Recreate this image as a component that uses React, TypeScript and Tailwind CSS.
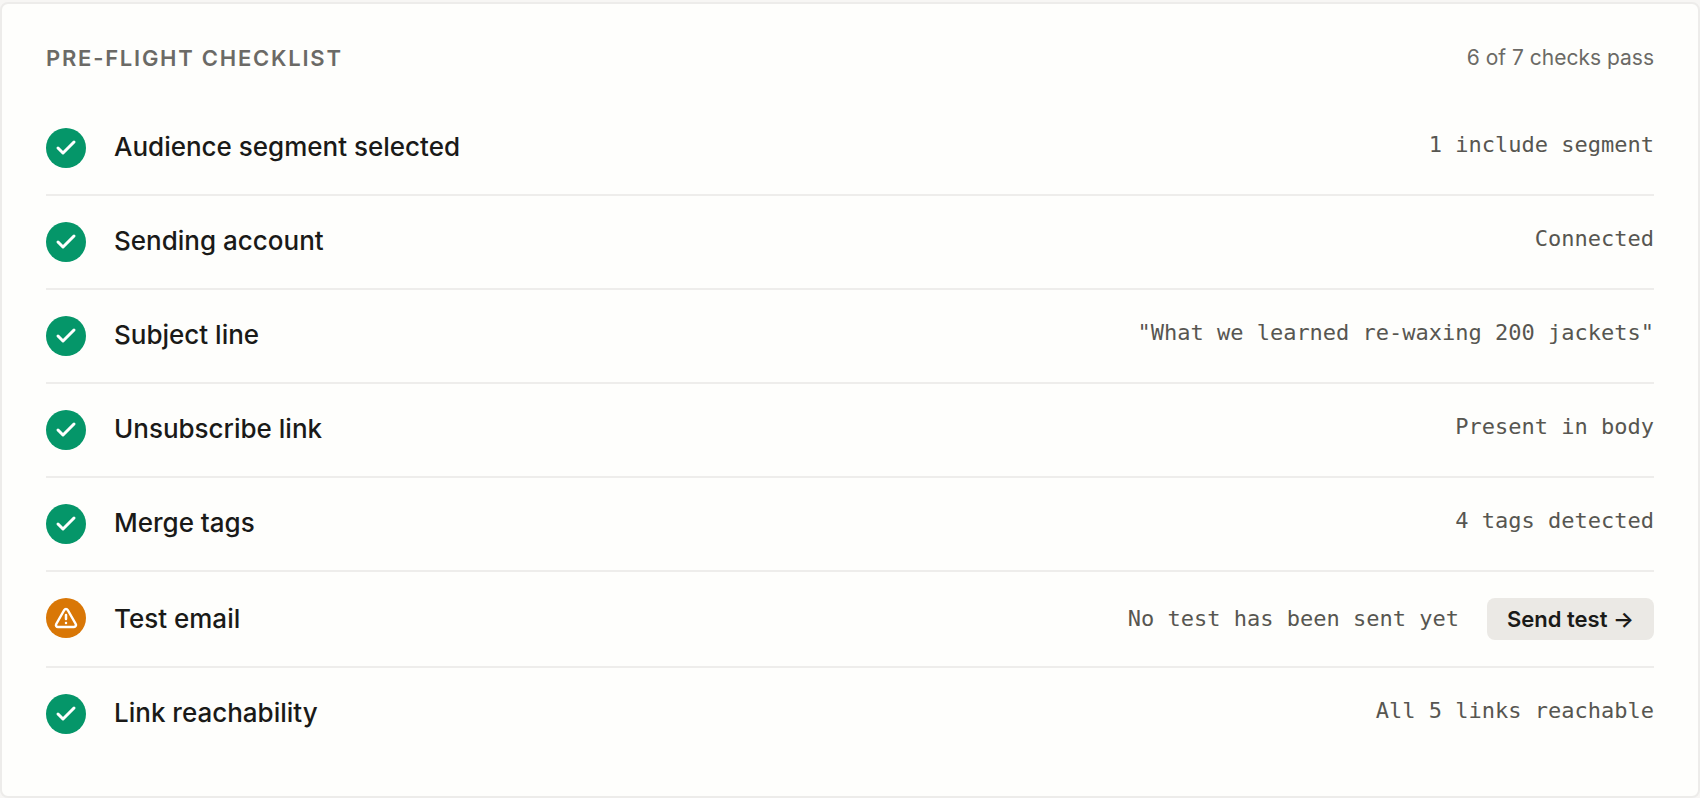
import { Check, TriangleAlert } from "lucide-react";

type CheckItem = {
  title: string;
  detail: string;
  action?: string;
};

const CHECKS: CheckItem[] = [
  { title: "Audience segment selected", detail: "1 include segment" },
  { title: "Sending account", detail: "Connected" },
  { title: "Subject line", detail: '"What we learned re-waxing 200 jackets"' },
  { title: "Unsubscribe link", detail: "Present in body" },
  { title: "Merge tags", detail: "4 tags detected" },
  {
    title: "Test email",
    detail: "No test has been sent yet",
    action: "Send test →",
  },
  { title: "Link reachability", detail: "All 5 links reachable" },
];

const StatusIcon = ({ passed }: { passed: boolean }) => {
  return (
    <span
      className={`flex size-10 shrink-0 items-center justify-center self-start rounded-full text-white ${
        passed ? "bg-[#059669]" : "bg-[#d97706]"
      }`}
    >
      {passed ? (
        <Check size={24} strokeWidth={3} />
      ) : (
        <TriangleAlert size={24} strokeWidth={2.5} />
      )}
    </span>
  );
};

const ChecklistRow = ({ title, detail, action }: CheckItem) => {
  return (
    <li
      className={`flex gap-7 border-b-2 border-[#eeedeb] py-[26px] last:border-b-0 ${
        action ? "items-center" : "items-start"
      }`}
    >
      <StatusIcon passed={!action} />

      <span className="flex-1 text-[26px] leading-[38px] font-medium text-[#1a1a18]">
        {title}
      </span>

      <span className="font-['DejaVu_Sans_Mono',monospace] text-[22px] leading-[34px] text-[#575651]">
        {detail}
      </span>

      {action && (
        <button
          type="button"
          className="h-[42px] rounded-lg bg-[#ebe9e5] px-5 text-[22px] leading-[34px] font-semibold text-[#1a1a18]"
        >
          {action}
        </button>
      )}
    </li>
  );
};

export default function App() {
  return (
    <main className="bg-[#f7f6f4] pt-0.5 font-['Inter',sans-serif]">
      <section className="rounded-lg border-2 border-[#edecea] bg-[#fefefc] px-11 py-9">
        <header className="mb-[26px] flex items-center justify-between leading-9 text-[#6b6a66]">
          <h2 className="text-[22px] font-semibold tracking-[0.08em] uppercase">
            Pre-flight checklist
          </h2>
          <p className="text-[21px]">6 of 7 checks pass</p>
        </header>

        <ul>
          {CHECKS.map((check) => (
            <ChecklistRow key={check.title} {...check} />
          ))}
        </ul>
      </section>
    </main>
  );
}
